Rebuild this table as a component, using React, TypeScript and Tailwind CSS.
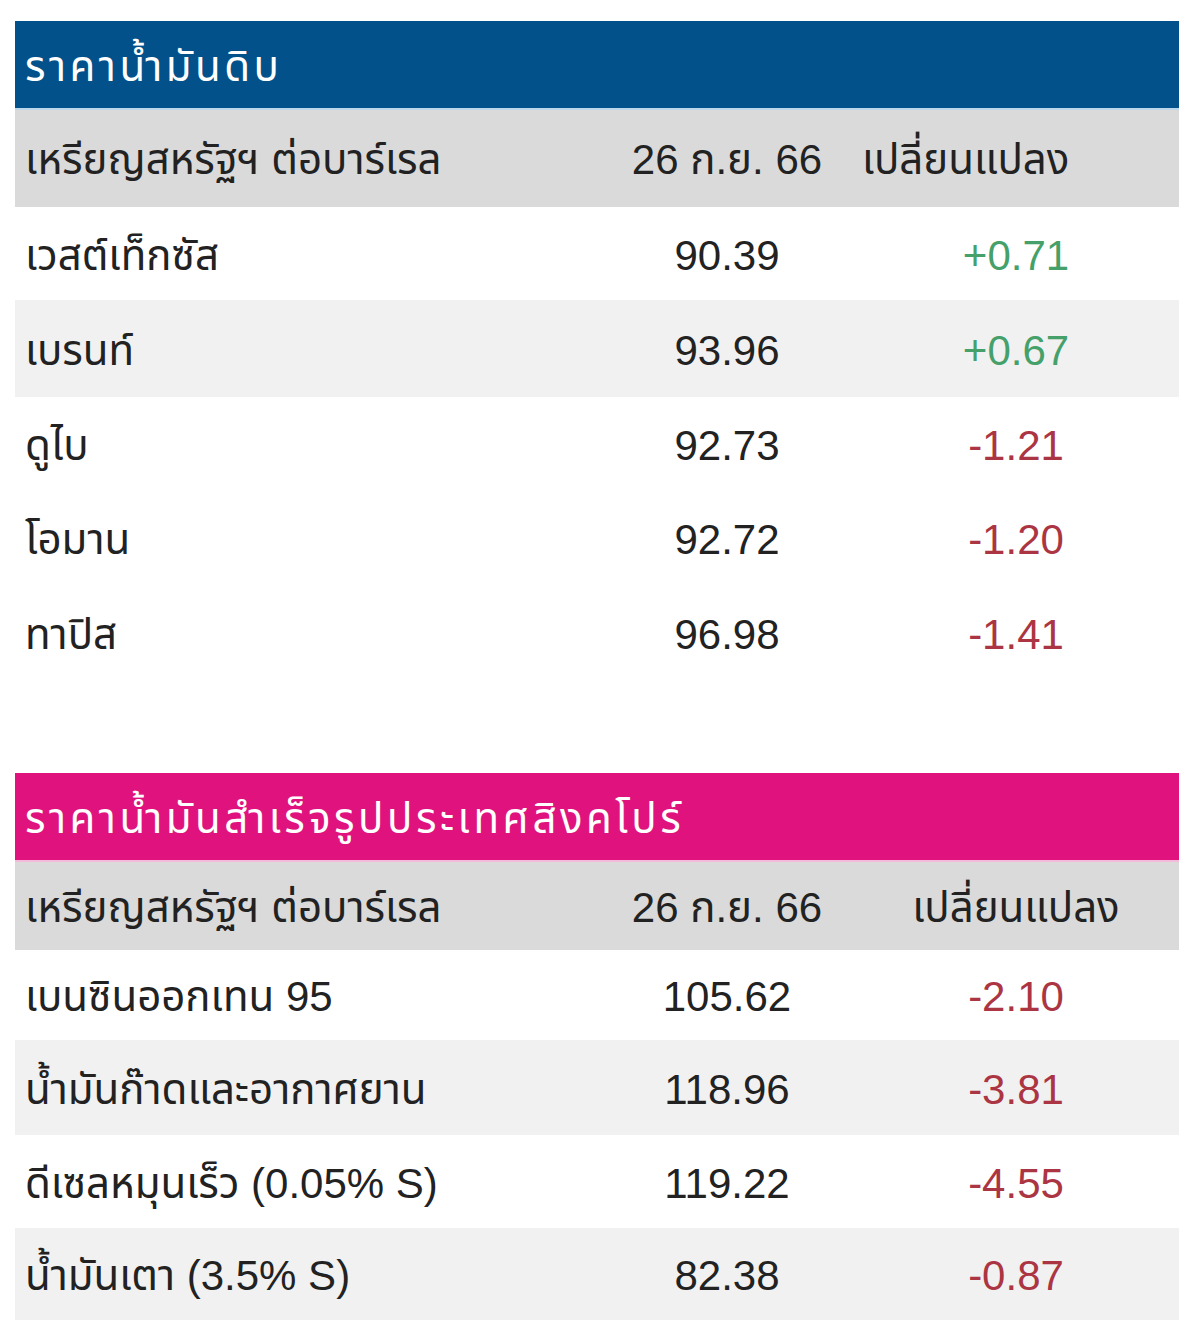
import React from 'react'

type Row = { name: string; price: string; change: string; h: string; bg: string }

const crude: Row[] = [
  { name: 'เวสต์เท็กซัส', price: '90.39', change: '+0.71', h: 'h-[93px]', bg: 'bg-white' },
  { name: 'เบรนท์', price: '93.96', change: '+0.67', h: 'h-[97px]', bg: 'bg-[#f1f1f1]' },
  { name: 'ดูไบ', price: '92.73', change: '-1.21', h: 'h-[93px]', bg: 'bg-white' },
  { name: 'โอมาน', price: '92.72', change: '-1.20', h: 'h-[95px]', bg: 'bg-white' },
  { name: 'ทาปิส', price: '96.98', change: '-1.41', h: 'h-[95px]', bg: 'bg-white' },
]

const refined: Row[] = [
  { name: 'เบนซินออกเทน 95', price: '105.62', change: '-2.10', h: 'h-[90px]', bg: 'bg-white' },
  { name: 'น้ำมันก๊าดและอากาศยาน', price: '118.96', change: '-3.81', h: 'h-[95px]', bg: 'bg-[#f1f1f1]' },
  { name: 'ดีเซลหมุนเร็ว (0.05% S)', price: '119.22', change: '-4.55', h: 'h-[93px]', bg: 'bg-white' },
  { name: 'น้ำมันเตา (3.5% S)', price: '82.38', change: '-0.87', h: 'h-[92px]', bg: 'bg-[#f1f1f1]' },
]

const PriceTable = ({
  title,
  titleBg,
  headerH,
  changeHeadAlign,
  rows,
}: {
  title: string
  titleBg: string
  headerH: string
  changeHeadAlign: string
  rows: Row[]
}) => {
  return (
    <div className="w-[1164px]">
      <div className={`h-[89px] flex items-center pl-[10px] pt-[5px] tracking-[3.5px] text-white ${titleBg}`}>
        {title}
      </div>
      <div className={`grid grid-cols-[586px_252px_326px] items-center pt-[3px] bg-[#dadada] ${headerH}`}>
        <div className="pl-[10px]">เหรียญสหรัฐฯ ต่อบาร์เรล</div>
        <div className="text-center">26 ก.ย. 66</div>
        <div className={changeHeadAlign}>เปลี่ยนแปลง</div>
      </div>
      {rows.map((r) => (
        <div key={r.name} className={`grid grid-cols-[586px_252px_326px] items-center pt-[4px] ${r.h} ${r.bg}`}>
          <div className="pl-[10px]">{r.name}</div>
          <div className="text-center">{r.price}</div>
          <div className={`text-center ${r.change.startsWith('+') ? 'text-[#45a06a]' : 'text-[#ab3542]'}`}>
            {r.change}
          </div>
        </div>
      ))}
    </div>
  )
}

const App = () => {
  return (
    <div className="w-[1200px] h-[1342px] bg-white pt-[21px] pl-[15px] text-[42px] leading-none text-[#222] font-['Liberation_Sans','Noto_Sans_Thai','DejaVu_Sans',sans-serif]">
      <PriceTable
        title="ราคาน้ำมันดิบ"
        titleBg="bg-[#02518a] border-b-2 border-[#bcd7ec]"
        headerH="h-[97px]"
        changeHeadAlign="pl-[9px]"
        rows={crude}
      />
      <div className="h-[93px]" />
      <PriceTable
        title="ราคาน้ำมันสำเร็จรูปประเทศสิงคโปร์"
        titleBg="bg-[#e0137e] border-b-2 border-[#f5b9d9]"
        headerH="h-[88px]"
        changeHeadAlign="text-center"
        rows={refined}
      />
    </div>
  )
}

export default App
